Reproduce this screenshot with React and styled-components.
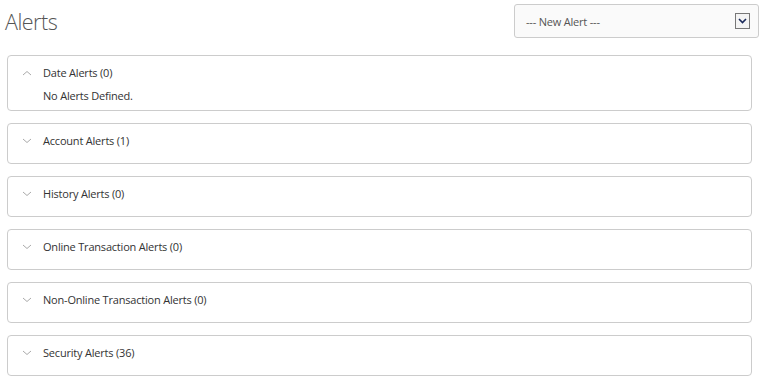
import React from "react";
import styled, { createGlobalStyle } from "styled-components";

const Global = createGlobalStyle`
  html, body { margin: 0; padding: 0; background: #fff; }
  body { font-family: "Open Sans", "Liberation Sans", sans-serif; color: #333; }
`;

const Page = styled.div`
  padding: 4px 3px 0 7px;
`;

const TopBar = styled.div`
  display: flex;
  justify-content: space-between;
  align-items: flex-start;
  margin-bottom: 17px;
`;

const Title = styled.h1`
  margin: 5px 0 0 -2px;
  font-size: 21.5px;
  font-weight: 300;
  line-height: 26px;
  letter-spacing: -0.5px;
  color: #555;
`;

const Select = styled.div`
  box-sizing: border-box;
  width: 245px;
  height: 34px;
  border: 1px solid #ccc;
  border-radius: 3px;
  background: #fafafa;
  display: flex;
  align-items: center;
  justify-content: space-between;
  padding: 0 8px 0 11px;
  font-size: 11px;
  letter-spacing: -0.2px;
  color: #555;
`;

const SelectArrow = styled.span`
  box-sizing: border-box;
  width: 15px;
  height: 16px;
  border: 1px solid #777;
  background: #f4f4f4;
  display: flex;
  align-items: center;
  justify-content: center;
`;

const List = styled.div`
  display: flex;
  flex-direction: column;
  gap: 12px;
  width: 745px;
`;

const Card = styled.div`
  border: 1px solid #ccc;
  border-radius: 4px;
  background: #fff;
  padding: 0 14px 0 14px;
`;

const Header = styled.div`
  display: flex;
  align-items: center;
  gap: 11px;
  height: 16px;
  padding: 9px 0 ${(p) => (p.$open ? "7px" : "14px")} 0;
  font-size: 11px;
  line-height: 16px;
  letter-spacing: -0.2px;
`;

const Chevron = styled.svg`
  width: 10px;
  height: 6px;
  flex: none;
`;

const Body = styled.div`
  padding: 0 0 6px 21px;
  font-size: 11px;
  line-height: 16px;
  letter-spacing: -0.2px;
`;

const groups = [
  { name: "Date Alerts (0)", open: true },
  { name: "Account Alerts (1)" },
  { name: "History Alerts (0)" },
  { name: "Online Transaction Alerts (0)" },
  { name: "Non-Online Transaction Alerts (0)" },
  { name: "Security Alerts (36)" },
];

export default function App() {
  return (
    <>
      <Global />
      <Page>
        <TopBar>
          <Title>Alerts</Title>
          <Select>
            <span>--- New Alert ---</span>
            <SelectArrow>
              <svg width="9" height="6" viewBox="0 0 9 6">
                <path d="M1 1 L4.5 4.5 L8 1" fill="none" stroke="#1a2a5a" strokeWidth="1.6" />
              </svg>
            </SelectArrow>
          </Select>
        </TopBar>
        <List>
          {groups.map((g) => (
            <Card key={g.name}>
              <Header $open={g.open}>
                <Chevron viewBox="0 0 10 6">
                  <path
                    d={g.open ? "M1 5 L5 1.5 L9 5" : "M1 1 L5 4.5 L9 1"}
                    fill="none"
                    stroke="#aaa"
                    strokeWidth="1"
                  />
                </Chevron>
                <span>{g.name}</span>
              </Header>
              {g.open && <Body>No Alerts Defined.</Body>}
            </Card>
          ))}
        </List>
      </Page>
    </>
  );
}
